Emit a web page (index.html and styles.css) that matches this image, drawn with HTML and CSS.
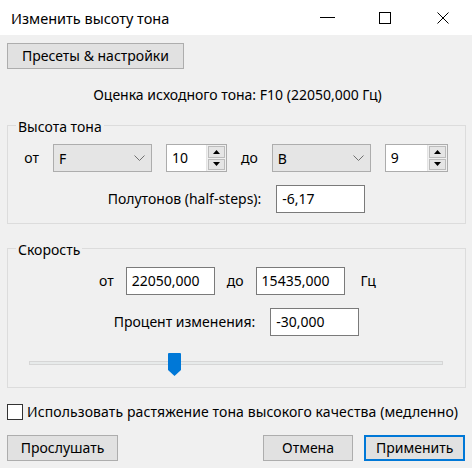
FILE: index.html
```html
<!DOCTYPE html>
<html lang="ru">
<head>
<meta charset="utf-8">
<title>Изменить высоту тона</title>
<link rel="stylesheet" href="styles.css">
</head>
<body>
<div class="window">
  <header class="titlebar">
    <span class="title">Изменить высоту тона</span>
    <div class="caption">
      <span class="cap-btn">
        <svg width="15" height="1" viewBox="0 0 15 1"><rect width="15" height="1" fill="#000"/></svg>
      </span>
      <span class="cap-btn">
        <svg width="12" height="12" viewBox="0 0 12 12"><rect x="0.5" y="0.5" width="11" height="11" fill="none" stroke="#000"/></svg>
      </span>
      <span class="cap-btn">
        <svg width="12" height="12" viewBox="0 0 12 12"><path d="M0.5 0.5 L11.5 11.5 M11.5 0.5 L0.5 11.5" stroke="#000" stroke-width="1"/></svg>
      </span>
    </div>
  </header>

  <main class="content">
    <div class="toolbar">
      <button class="btn presets">Пресеты &amp; настройки</button>
    </div>

    <p class="estimate">Оценка исходного тона: F10 (22050,000 Гц)</p>

    <fieldset class="group pitch">
      <legend>Высота тона</legend>
      <div class="row notes">
        <span class="lbl">от</span>
        <div class="combo">
          <span>F</span>
          <svg class="chev" width="11" height="6" viewBox="0 0 11 6"><path d="M0.5 0.5 L5.5 5.5 L10.5 0.5" fill="none" stroke="#707070"/></svg>
        </div>
        <div class="spin">
          <span class="spin-val">10</span>
          <div class="spin-btns">
            <span class="sb"><svg width="7" height="4" viewBox="0 0 7 4"><path d="M0 4 L3.5 0 L7 4 Z" fill="#000"/></svg></span>
            <span class="sb"><svg width="7" height="4" viewBox="0 0 7 4"><path d="M0 0 L7 0 L3.5 4 Z" fill="#000"/></svg></span>
          </div>
        </div>
        <span class="lbl">до</span>
        <div class="combo">
          <span>B</span>
          <svg class="chev" width="11" height="6" viewBox="0 0 11 6"><path d="M0.5 0.5 L5.5 5.5 L10.5 0.5" fill="none" stroke="#707070"/></svg>
        </div>
        <div class="spin wide">
          <span class="spin-val">9</span>
          <div class="spin-btns">
            <span class="sb"><svg width="7" height="4" viewBox="0 0 7 4"><path d="M0 4 L3.5 0 L7 4 Z" fill="#000"/></svg></span>
            <span class="sb"><svg width="7" height="4" viewBox="0 0 7 4"><path d="M0 0 L7 0 L3.5 4 Z" fill="#000"/></svg></span>
          </div>
        </div>
      </div>
      <div class="row">
        <span class="lbl">Полутонов (half-steps):</span>
        <span class="field">-6,17</span>
      </div>
    </fieldset>

    <fieldset class="group speed">
      <legend>Скорость</legend>
      <div class="row rates">
        <span class="lbl">от</span>
        <span class="field">22050,000</span>
        <span class="lbl">до</span>
        <span class="field">15435,000</span>
        <span class="lbl unit">Гц</span>
      </div>
      <div class="row">
        <span class="lbl">Процент изменения:</span>
        <span class="field">-30,000</span>
      </div>
      <div class="slider">
        <div class="track"></div>
        <svg class="thumb" style="left: 139px" width="13" height="23" viewBox="0 0 13 23"><path d="M1 0 H12 Q13 0 13 1 V17 L6.5 23 L0 17 V1 Q0 0 1 0 Z" fill="#0078d7"/></svg>
      </div>
    </fieldset>

    <label class="check">
      <span class="box"></span>
      <span>Использовать растяжение тона высокого качества (медленно)</span>
    </label>

    <div class="actions">
      <button class="btn preview">Прослушать</button>
      <div class="right">
        <button class="btn cancel">Отмена</button>
        <button class="btn apply">Применить</button>
      </div>
    </div>
  </main>
</div>
</body>
</html>
```

FILE: styles.css
```css
* {
  box-sizing: border-box;
}

html, body {
  margin: 0;
  padding: 0;
}

body {
  width: 472px;
  height: 468px;
  overflow: hidden;
  background: #f0f0f0;
  font-family: "Noto Sans", "Segoe UI", sans-serif;
  font-size: 14px;
  color: #000;
}

.window {
  display: flex;
  flex-direction: column;
  height: 468px;
}

/* title bar */
.titlebar {
  height: 35px;
  background: #fff;
  display: flex;
  align-items: center;
  justify-content: space-between;
}

.title {
  padding-left: 11px;
  font-size: 14.5px;
  line-height: 18px;
}

.caption {
  display: flex;
  height: 35px;
}

.cap-btn {
  width: 58px;
  height: 35px;
  display: flex;
  align-items: center;
  justify-content: center;
}

.cap-btn svg {
  display: block;
}

/* dialog body */
.content {
  padding: 8px 6px 0 7px;
  display: flex;
  flex-direction: column;
}

.toolbar {
  display: flex;
}

.btn {
  font: inherit;
  color: #000;
  background: #e1e1e1;
  border: 1px solid #adadad;
  height: 26px;
  padding: 0 10px;
  line-height: 22px;
  margin: 0;
}

.presets {
  width: 177px;
}

.estimate {
  margin: 17px 0 0;
  line-height: 18px;
  text-align: center;
  padding-left: 2px;
}

/* group boxes */
.group {
  margin: 0;
  min-width: 0;
  border: 1px solid #dcdcdc;
  padding: 9px 8px 10px;
}

.group legend {
  padding: 4px 2px 0;
  line-height: 16px;
}

.pitch {
  margin-top: 11px;
}

.speed {
  margin-top: 14px;
  padding-bottom: 11px;
}

.row {
  display: flex;
  align-items: center;
  justify-content: center;
  gap: 15px;
  height: 28px;
}

.row + .row {
  margin-top: 13px;
}

.notes {
  gap: 14px;
  padding-right: 1px;
}

.rates {
  gap: 12px;
  padding-left: 2px;
}

.rates .unit {
  margin-left: 4px;
}

.lbl {
  line-height: 18px;
  white-space: nowrap;
}

/* read-only combo box */
.combo {
  width: 99px;
  height: 28px;
  background: #e5e5e5;
  border: 1px solid #adadad;
  display: flex;
  align-items: center;
  justify-content: space-between;
  padding: 0 6px 0 5px;
}

.chev {
  display: block;
}

/* spin control */
.spin {
  width: 61px;
  height: 28px;
  display: flex;
  border: 1px solid #acacac;
  background: #fff;
}

.spin.wide {
  width: 63px;
}

.spin-val {
  flex: 1;
  padding-left: 5px;
  line-height: 26px;
}

.spin-btns {
  width: 20px;
  display: flex;
  flex-direction: column;
  background: #f0f0f0;
  border-left: 1px solid #e3e3e3;
  padding: 1px;
  gap: 1px;
}

.sb {
  flex: 1;
  background: #e5e5e5;
  border: 1px solid #bcbcbc;
  display: flex;
  align-items: center;
  justify-content: center;
}

.sb svg {
  display: block;
}

/* text fields */
.field {
  display: block;
  width: 89px;
  height: 28px;
  background: #fff;
  border: 1px solid #7a7a7a;
  line-height: 26px;
  padding-left: 5px;
}

/* slider */
.slider {
  position: relative;
  height: 24px;
  margin: 16px 0 0 13px;
  width: 414px;
}

.track {
  position: absolute;
  left: 0;
  right: 0;
  top: 9px;
  height: 4px;
  background: #e7eaea;
  border: 1px solid #d6d6d6;
}

.thumb {
  position: absolute;
  top: 1px;
  display: block;
}

/* checkbox */
.check {
  display: flex;
  align-items: center;
  gap: 4px;
  margin-top: 15px;
  line-height: 18px;
  white-space: nowrap;
  letter-spacing: 0.1px;
}

.box {
  width: 16px;
  height: 16px;
  background: #fff;
  border: 1px solid #333;
  flex: none;
}

/* bottom buttons */
.actions {
  display: flex;
  justify-content: space-between;
  margin-top: 14px;
}

.right {
  display: flex;
  gap: 11px;
  padding-right: 1px;
}

.preview {
  width: 111px;
}

.cancel {
  width: 90px;
}

.apply {
  width: 101px;
  border: 2px solid #0078d7;
}
```
